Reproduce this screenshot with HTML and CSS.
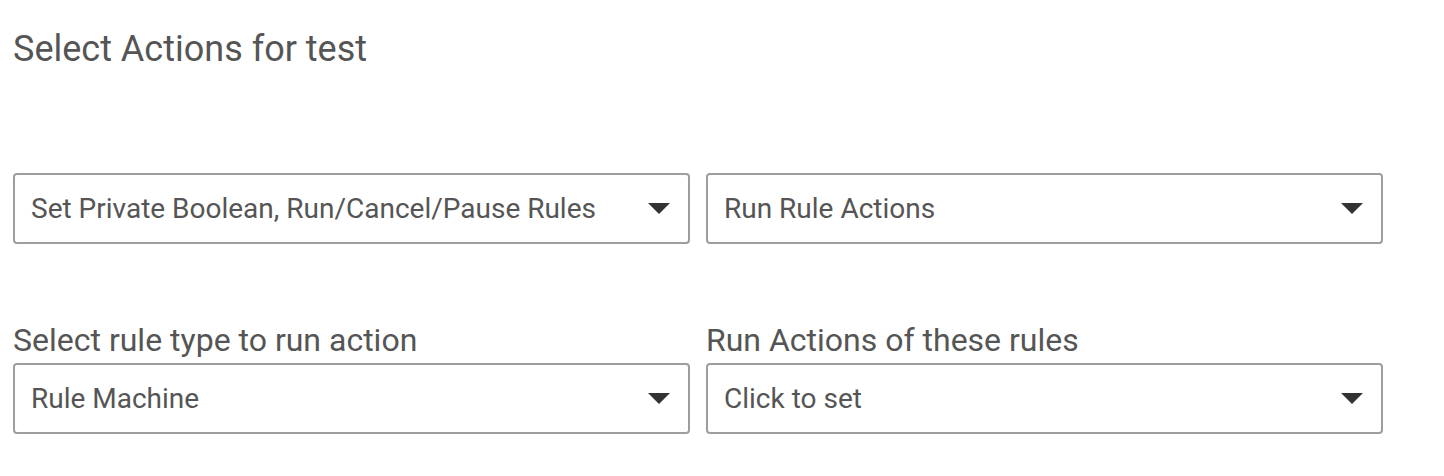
FILE: index.html
```html
<!DOCTYPE html>
<html>
<head>
<meta charset="utf-8">
<link rel="stylesheet" href="styles.css">
</head>
<body>
<div class="page">
  <h2 class="title">Select Actions for test</h2>
  <div class="row row-first">
    <div class="field">
      <div class="select"><span class="value">Set Private Boolean, Run/Cancel/Pause Rules</span><span class="arrow"></span></div>
    </div>
    <div class="field">
      <div class="select"><span class="value">Run Rule Actions</span><span class="arrow"></span></div>
    </div>
  </div>
  <div class="row row-second">
    <div class="field">
      <label class="label">Select rule type to run action</label>
      <div class="select"><span class="value">Rule Machine</span><span class="arrow"></span></div>
    </div>
    <div class="field">
      <label class="label">Run Actions of these rules</label>
      <div class="select"><span class="value">Click to set</span><span class="arrow"></span></div>
    </div>
  </div>
</div>
</body>
</html>
```
FILE: styles.css
```css
html, body {
  margin: 0;
  padding: 0;
  background: #ffffff;
}
.page {
  font-family: Roboto, "Noto Sans", sans-serif;
  color: #555555;
  padding: 29px 0 0 13px;
}
.title {
  margin: 0;
  font-size: 36px;
  font-weight: 400;
  line-height: 40px;
}
.row {
  display: grid;
  grid-template-columns: 677px 677px;
  column-gap: 16px;
}
.row-first {
  margin-top: 104px;
}
.row-second {
  margin-top: 78px;
}
.field {
  display: flex;
  flex-direction: column;
}
.label {
  font-size: 32px;
  line-height: 36px;
  margin-bottom: 5px;
}
.select {
  box-sizing: border-box;
  height: 71px;
  border: 2px solid #9e9e9e;
  border-radius: 4px;
  display: flex;
  align-items: center;
  justify-content: space-between;
  padding: 0 18px 0 16px;
}
.value {
  font-size: 28px;
  color: #555555;
}
.arrow {
  width: 0;
  height: 0;
  border-left: 11px solid transparent;
  border-right: 11px solid transparent;
  border-top: 11px solid #333333;
}
```
